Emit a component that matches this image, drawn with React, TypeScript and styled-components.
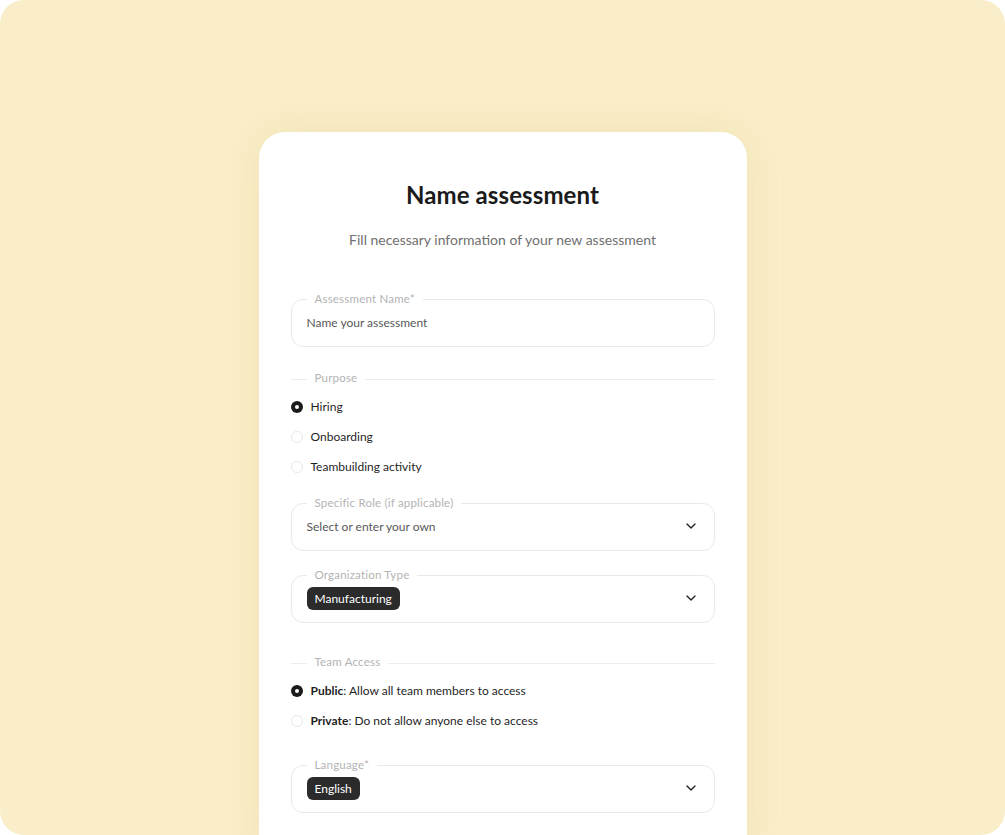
import React from 'react'
import styled, { createGlobalStyle } from 'styled-components'
import { ChevronDown } from 'lucide-react'

const GlobalStyle = createGlobalStyle`
  html, body {
    margin: 0;
    padding: 0;
    background: #ffffff;
  }
  body {
    font-family: Lato, "Noto Sans", sans-serif;
    color: #1c1c1c;
    -webkit-font-smoothing: antialiased;
  }
  * {
    box-sizing: border-box;
  }
`

const Backdrop = styled.div`
  height: 100vh;
  background: #f9eec9;
  border-radius: 24px;
  overflow: hidden;
  display: flex;
  justify-content: center;
  align-items: flex-start;
  padding-top: 132px;
`

const Card = styled.main`
  width: 488px;
  flex-shrink: 0;
  background: #ffffff;
  border-radius: 26px;
  padding: 49px 32px 48px;
  box-shadow: 0 0 36px rgba(214, 186, 104, 0.22);
`

const Header = styled.header`
  text-align: center;
`

const Title = styled.h1`
  margin: 0;
  font-size: 24px;
  line-height: 28px;
  font-weight: 700;
  color: #1b1b1b;
  letter-spacing: 0.1px;
`

const Subtitle = styled.p`
  margin: 21px 0 0;
  font-size: 14px;
  line-height: 20px;
  color: #6f6f6f;
`

const Form = styled.form`
  margin-top: 49px;
  display: flex;
  flex-direction: column;
`

const Field = styled.div<{ $top?: number }>`
  position: relative;
  height: 48px;
  margin-top: ${(p) => p.$top ?? 0}px;
  border: 1px solid #e9e9e9;
  border-radius: 12px;
  padding: 0 15px 2px;
  display: flex;
  align-items: center;
  justify-content: space-between;
  color: #222;
`

const FloatingLabel = styled.label`
  position: absolute;
  top: -8px;
  left: 15px;
  padding: 0 8px;
  background: #ffffff;
  font-size: 11.5px;
  line-height: 14px;
  letter-spacing: 0.2px;
  color: #b3b3b3;
`

const Placeholder = styled.span`
  font-size: 12px;
  color: #585858;
`

const Chip = styled.span`
  display: inline-flex;
  align-items: center;
  height: 23px;
  padding: 0 8px;
  border-radius: 6px;
  background: #2b2b2b;
  color: #ffffff;
  font-size: 12px;
`

const Divider = styled.div<{ $top?: number }>`
  display: flex;
  align-items: center;
  gap: 8px;
  margin-top: ${(p) => p.$top ?? 0}px;
  height: 14px;
  font-size: 11.5px;
  letter-spacing: 0.2px;
  color: #b3b3b3;

  span {
    line-height: 14px;
    padding-bottom: 2px;
  }

  &::before,
  &::after {
    content: '';
    height: 1px;
    background: #ececec;
  }
  &::before {
    width: 16px;
  }
  &::after {
    flex: 1;
  }
`

const RadioList = styled.div<{ $top?: number }>`
  margin-top: ${(p) => p.$top ?? 0}px;
  display: flex;
  flex-direction: column;
`

const RadioRow = styled.label`
  height: 30px;
  display: flex;
  align-items: center;
  gap: 8px;
  font-size: 12px;
  color: #1f1f1f;

  span {
    padding-bottom: 2px;
  }

  b {
    font-weight: 700;
  }
`

const RadioDot = styled.i<{ $checked?: boolean }>`
  width: 12px;
  height: 12px;
  border-radius: 50%;
  flex-shrink: 0;
  ${(p) =>
    p.$checked
      ? `
    background: #1b1b1b;
    position: relative;
    &::after {
      content: '';
      position: absolute;
      left: 4px;
      top: 4px;
      width: 4px;
      height: 4px;
      border-radius: 50%;
      background: #ffffff;
    }
  `
      : `
    border: 1px solid #e7e7e7;
  `}
`

const Chevron = styled(ChevronDown)`
  color: #1e1e1e;
  flex-shrink: 0;
`

const purposeOptions = [
  { id: 'hiring', label: 'Hiring', checked: true },
  { id: 'onboarding', label: 'Onboarding' },
  { id: 'teambuilding', label: 'Teambuilding activity' },
]

const accessOptions = [
  { id: 'public', title: 'Public', text: 'Allow all team members to access', checked: true },
  { id: 'private', title: 'Private', text: 'Do not allow anyone else to access' },
]

const App = () => {
  return (
    <>
      <GlobalStyle />
      <Backdrop>
        <Card>
          <Header>
            <Title>Name assessment</Title>
            <Subtitle>Fill necessary information of your new assessment</Subtitle>
          </Header>

          <Form>
            <Field>
              <FloatingLabel>Assessment Name*</FloatingLabel>
              <Placeholder>Name your assessment</Placeholder>
            </Field>

            <Divider $top={25}>
              <span>Purpose</span>
            </Divider>
            <RadioList $top={6}>
              {purposeOptions.map((item) => (
                <RadioRow key={item.id}>
                  <RadioDot $checked={item.checked} />
                  <span>{item.label}</span>
                </RadioRow>
              ))}
            </RadioList>

            <Field $top={21}>
              <FloatingLabel>Specific Role (if applicable)</FloatingLabel>
              <Placeholder>Select or enter your own</Placeholder>
              <Chevron size={16} strokeWidth={2} />
            </Field>

            <Field $top={24}>
              <FloatingLabel>Organization Type</FloatingLabel>
              <Chip>Manufacturing</Chip>
              <Chevron size={16} strokeWidth={2} />
            </Field>

            <Divider $top={33}>
              <span>Team Access</span>
            </Divider>
            <RadioList $top={6}>
              {accessOptions.map((item) => (
                <RadioRow key={item.id}>
                  <RadioDot $checked={item.checked} />
                  <span>
                    <b>{item.title}</b>: {item.text}
                  </span>
                </RadioRow>
              ))}
            </RadioList>

            <Field $top={29}>
              <FloatingLabel>Language*</FloatingLabel>
              <Chip>English</Chip>
              <Chevron size={16} strokeWidth={2} />
            </Field>
          </Form>
        </Card>
      </Backdrop>
    </>
  )
}

export default App
